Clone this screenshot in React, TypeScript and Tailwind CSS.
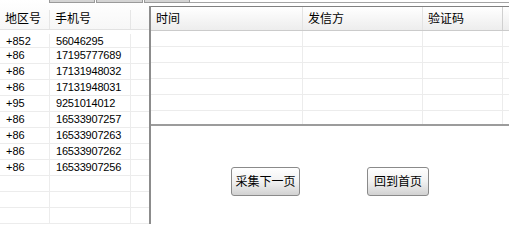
import React from "react";

const phones: [string, string][] = [
  ["+852", "56046295"],
  ["+86", "17195777689"],
  ["+86", "17131948032"],
  ["+86", "17131948031"],
  ["+95", "9251014012"],
  ["+86", "16533907257"],
  ["+86", "16533907263"],
  ["+86", "16533907262"],
  ["+86", "16533907256"],
];

const font = "font-['Liberation_Sans','Noto_Sans_CJK_SC',sans-serif]";

/** Bottom edge of a tab bar that sits above the panels. */
function TabStrip() {
  return (
    <div className="pointer-events-none absolute left-0 top-0 flex h-[3px] w-full">
      <div className="w-[49px]" />
      <div className="w-[46px] border-x border-b border-[#9a9a9a] bg-[#d4d4d4]" />
      <div className="ml-[1px] w-[47px] border-x border-b border-[#9a9a9a] bg-[#d4d4d4]" />
      <div className="ml-[1px] w-[46px] border-x border-b border-[#9a9a9a] bg-[#d4d4d4]" />
      <div className="flex-1 border-b border-[#a4a4a4]" />
    </div>
  );
}

function PhoneList() {
  const empty = [0, 1, 2];
  return (
    <div className="flex w-[149px] shrink-0 flex-col">
      <div className="flex h-[30px] shrink-0 items-center border-b border-[#e2e2e2] bg-gradient-to-b from-white to-[#f7f7f7] pt-[10px] text-[12px]">
        <div className="h-full w-[50px] border-r border-[#e6e6e6] pl-[5px]">地区号</div>
        <div className="h-full w-[81px] border-r border-[#e6e6e6] pl-[5px]">手机号</div>
        <div className="flex-1" />
      </div>
      {phones.map(([area, num], i) => (
        <div
          key={num}
          className={`flex shrink-0 border-b border-[#ececec] text-[11px] leading-[14px] ${i === 0 ? "h-[18px] pt-[4px]" : "h-[16px] pt-[0px]"}`}
        >
          <div className="w-[50px] border-r border-[#ececec] pl-[6px]">{area}</div>
          <div className="w-[81px] border-r border-[#ececec] pl-[6px] tracking-[-0.2px]">{num}</div>
          <div className="flex-1" />
        </div>
      ))}
      {empty.map((k) => (
        <div key={k} className="flex h-[16px] shrink-0 border-b border-[#ececec]">
          <div className="w-[50px] border-r border-[#ececec]" />
          <div className="w-[81px] border-r border-[#ececec]" />
          <div className="flex-1" />
        </div>
      ))}
    </div>
  );
}

function SmsTable() {
  const rows = [0, 1, 2, 3, 4, 5];
  return (
    <div className="flex h-[120px] shrink-0 flex-col border-t border-b-2 border-t-[#808080] border-b-[#9c9c9c]">
      <div className="h-[117px] overflow-hidden">
        <div className="flex h-[24px] items-center border-b border-[#cbcbcb] bg-gradient-to-b from-white to-[#ededed] text-[12px]">
          <div className="flex h-full w-[152px] items-center border-r border-[#e3e3e3] pl-[5px]">时间</div>
          <div className="flex h-full w-[120px] items-center border-r border-[#e3e3e3] pl-[5px]">发信方</div>
          <div className="flex h-full w-[80px] items-center border-r border-[#d0d0d0] pl-[5px]">验证码</div>
          <div className="flex-1" />
        </div>
        {rows.map((r) => (
          <div key={r} className="flex h-[16px] border-b border-[#ececec]">
            <div className="w-[152px] border-r border-[#ececec]" />
            <div className="w-[120px] border-r border-[#ececec]" />
            <div className="w-[80px] border-r border-[#ececec]" />
            <div className="flex-1" />
          </div>
        ))}
      </div>
    </div>
  );
}

function WinButton({ label, width }: { label: string; width: string }) {
  return (
    <button
      className={`${width} h-[29px] rounded-[3px] border border-[#8a8a8a] bg-gradient-to-b from-white via-[#f1f1f1] to-[#d2d2d2] text-[12px] leading-none text-black`}
    >
      {label}
    </button>
  );
}

export default function App() {
  return (
    <div className={`relative h-[224px] w-[509px] overflow-hidden bg-white text-black ${font}`}>
      <TabStrip />
      <div className="flex h-full">
        <PhoneList />
        <div className="mt-[6px] flex flex-1 flex-col border-l-2 border-[#8c8c8c]">
          <SmsTable />
          <div className="flex gap-[67px] pl-[80px] pt-[41px]">
            <WinButton label="采集下一页" width="w-[69px]" />
            <WinButton label="回到首页" width="w-[62px]" />
          </div>
        </div>
      </div>
    </div>
  );
}
